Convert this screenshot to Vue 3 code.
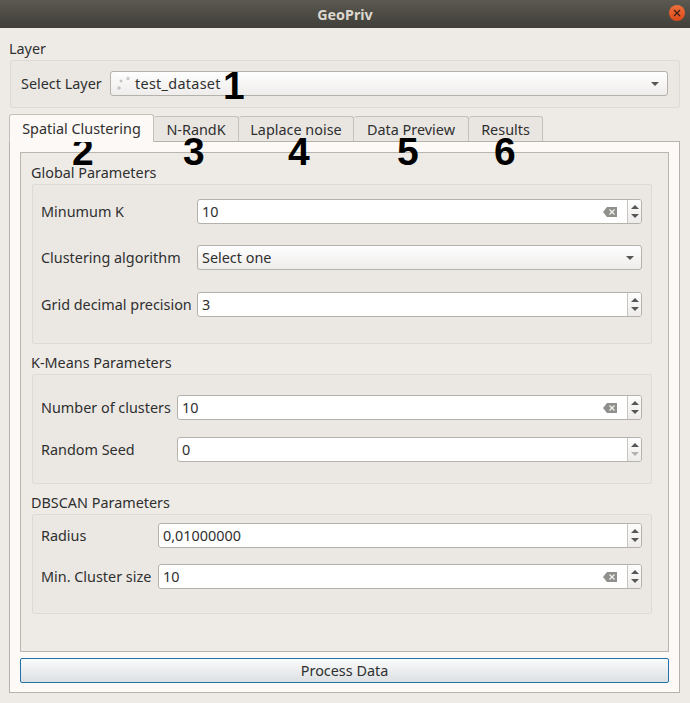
<template>
  <div class="window">
    <header class="titlebar">
      <span class="title">GeoPriv</span>
      <span class="close">
        <svg width="8" height="8" viewBox="0 0 8 8"><path d="M1 1l6 6M7 1L1 7" stroke="#3c2016" stroke-width="1.3" fill="none" /></svg>
      </span>
    </header>

    <main class="body">
      <div class="heading layer-heading">Layer</div>
      <section class="layer-box">
        <label class="layer-label">Select Layer</label>
        <div class="combo">
          <svg class="layer-icon" width="14" height="14" viewBox="0 0 14 14">
            <circle cx="2" cy="11" r="1.2" />
            <circle cx="4" cy="4" r="1" />
            <circle cx="11" cy="1.500" r="1.200" />
          </svg>
          <span class="layer-name">test_dataset</span>
          <i class="caret"></i>
        </div>
      </section>

      <nav class="tabs">
        <div v-for="tab in tabs" :key="tab.name" class="tab" :class="{ active: tab.active }" :style="{ width: tab.width + 'px' }">
          {{ tab.name }}
        </div>
      </nav>

      <section class="pane">
        <div class="frame">
          <template v-for="group in groups" :key="group.title">
            <div class="heading group-heading">{{ group.title }}</div>
            <div class="group" :class="group.cls">
              <div v-for="row in group.rows" :key="row.label" class="row">
                <label>{{ row.label }}</label>
                <div v-if="row.select" class="combo field-combo">
                  <span>{{ row.value }}</span>
                  <i class="caret"></i>
                </div>
                <div v-else class="spin">
                  <span class="value">{{ row.value }}</span>
                  <svg v-if="row.clear" class="clear" width="14" height="10" viewBox="0 0 14 10">
                    <path d="M4 0h10v10H4L0 5z" fill="#8f8f8c" />
                    <path d="M6.500 2.500l5 5M11.500 2.500l-5 5" stroke="#f4f4f2" stroke-width="1.200" fill="none" />
                  </svg>
                  <div class="steppers">
                    <i class="up"></i>
                    <i class="down" :class="{ off: row.minReached }"></i>
                  </div>
                </div>
              </div>
            </div>
          </template>
        </div>
        <button class="process">Process Data</button>
      </section>
    </main>

    <span v-for="n in marks" :key="n.text" class="mark" :style="{ left: n.x + 'px', top: n.y + 'px' }">{{ n.text }}</span>
  </div>
</template>

<script setup>
const tabs = [
  { name: 'Spatial Clustering', width: 145, active: true },
  { name: 'N-RandK', width: 85 },
  { name: 'Laplace noise', width: 115 },
  { name: 'Data Preview', width: 115 },
  { name: 'Results', width: 74 },
]

const groups = [
  {
    title: 'Global Parameters',
    cls: 'global',
    rows: [
      { label: 'Minumum K', value: '10', clear: true },
      { label: 'Clustering algorithm', value: 'Select one', select: true },
      { label: 'Grid decimal precision', value: '3' },
    ],
  },
  {
    title: 'K-Means Parameters',
    cls: 'kmeans',
    rows: [
      { label: 'Number of clusters', value: '10', clear: true },
      { label: 'Random Seed', value: '0', minReached: true },
    ],
  },
  {
    title: 'DBSCAN Parameters',
    cls: 'dbscan',
    rows: [
      { label: 'Radius', value: '0,01000000' },
      { label: 'Min. Cluster size', value: '10', clear: true },
    ],
  },
]

// hand-drawn annotation numbers on top of the dialog
const marks = [
  { text: '1', x: 223, y: 64 },
  { text: '2', x: 72, y: 130 },
  { text: '3', x: 183, y: 130 },
  { text: '4', x: 288, y: 130 },
  { text: '5', x: 397, y: 130 },
  { text: '6', x: 494, y: 130 },
]
</script>

<style>
html, body { margin: 0; background: #eeebe7; }
</style>

<style scoped>
.window {
  position: relative;
  width: 690px;
  height: 703px;
  overflow: hidden;
  background: #eeebe7;
  color: #2f2f2f;
  font-family: "Noto Sans", "Open Sans", sans-serif;
  font-size: 14.4px;
}
.titlebar {
  position: relative;
  height: 28px;
  display: flex;
  align-items: center;
  justify-content: center;
  background: linear-gradient(#5b5950, #3f3e39);
}
.title {
  color: #dcd8cf;
  font-weight: 700;
  font-size: 14.3px;
}
.close {
  position: absolute;
  right: 5px;
  top: 5px;
  width: 16px;
  height: 16px;
  border-radius: 50%;
  background: linear-gradient(#f0703c, #d9481a);
  display: flex;
  align-items: center;
  justify-content: center;
}
.body {
  padding: 0 10px 0 9px;
}
.heading {
  height: 20px;
  line-height: 20px;
}
.layer-heading {
  margin-top: 11px;
  height: 21px;
}
.layer-box {
  margin-left: 1px;
  height: 48px;
  box-sizing: border-box;
  border: 1px solid #dedad5;
  border-radius: 2px;
  background: #ebe8e4;
  display: flex;
  align-items: center;
  padding: 0 11px 1px 10px;
}
.layer-label {
  width: 89px;
  flex: none;
}
.layer-name {
  letter-spacing: 0.3px;
}
.combo {
  flex: 1;
  height: 25px;
  box-sizing: border-box;
  border: 1px solid #b5b1ab;
  border-radius: 3px;
  background: linear-gradient(#fefefe, #efedeb);
  display: flex;
  align-items: center;
  padding: 0 5px;
  position: relative;
}
.layer-icon {
  fill: none;
  stroke: #9b9b98;
  stroke-width: 0.7;
  margin: 0 4px 0 1px;
}
.caret {
  margin-left: auto;
  margin-right: 3px;
  border-left: 4px solid transparent;
  border-right: 4px solid transparent;
  border-top: 4px solid #565656;
}
.tabs {
  display: flex;
  align-items: flex-end;
  margin-top: 6px;
  height: 27px;
}
.tab {
  box-sizing: border-box;
  height: 25px;
  line-height: 25px;
  text-align: center;
  background: #e9e6e2;
  border: 1px solid #c4c0ba;
  border-bottom: none;
  border-left: none;
  border-radius: 3px 3px 0 0;
}
.tab.active {
  line-height: 27px;
  background: #fdf9f6;
  border: 1px solid #c4c0ba;
  border-bottom: none;
  position: relative;
  z-index: 1;
  margin-bottom: -1px;
  height: 28px;
}
.pane {
  height: 552px;
  box-sizing: border-box;
  border: 1px solid #b5b1ab;
  background: #fdf9f6;
  padding: 10px;
  display: flex;
  flex-direction: column;
}
.frame {
  flex: none;
  height: 500px;
  box-sizing: border-box;
  border: 1px solid #b9b5af;
  background: #eeebe7;
  padding: 10px 16px 0 11px;
}
.group-heading {
  height: 21px;
  line-height: 20px;
  margin-left: -1px;
}
.group {
  margin-bottom: 9px;
  box-sizing: border-box;
  border: 1px solid #dedad5;
  border-radius: 2px;
  background: #ebe8e4;
  padding: 0 9px 0 8px;
  display: grid;
  grid-auto-rows: 25px;
}
.global {
  height: 160px;
  padding-top: 14px;
  row-gap: 21.3px;
  --label: 156px;
}
.kmeans {
  height: 110px;
  padding-top: 20px;
  row-gap: 17px;
  --label: 136px;
}
.dbscan {
  height: 100px;
  padding-top: 8px;
  row-gap: 16px;
  --label: 117px;
}
.row {
  display: grid;
  grid-template-columns: var(--label) 1fr;
  align-items: center;
}
.field-combo {
  height: 25px;
  padding: 0 4px;
}
.spin {
  height: 25px;
  box-sizing: border-box;
  border: 1px solid #b5b1ab;
  border-radius: 3px;
  background: #fff;
  display: flex;
  align-items: center;
  padding-left: 4px;
}
.value {
  flex: 1;
}
.clear {
  margin-right: 10px;
}
.steppers {
  width: 13px;
  height: 100%;
  flex: none;
  border-left: 1px solid #c9c6c1;
  background: linear-gradient(#fdfdfd, #eeecea);
  border-radius: 0 2px 2px 0;
  display: flex;
  flex-direction: column;
  align-items: center;
  justify-content: center;
  gap: 5px;
}
.up, .down {
  border-left: 4px solid transparent;
  border-right: 4px solid transparent;
}
.up { border-bottom: 4px solid #565656; }
.down { border-top: 4px solid #565656; }
.down.off { border-top-color: #b3b1ad; }
.process {
  margin-top: 6px;
  flex: none;
  height: 25px;
  box-sizing: border-box;
  border: 1px solid #2272a8;
  border-radius: 2px;
  background: linear-gradient(#fafbfb, #dce0e3);
  color: #2f2f2f;
  font: inherit;
  padding: 0;
}
.mark {
  position: absolute;
  font-family: "Liberation Sans", Arial, sans-serif;
  font-weight: 700;
  font-size: 39px;
  line-height: 44px;
  color: #000;
}
</style>
